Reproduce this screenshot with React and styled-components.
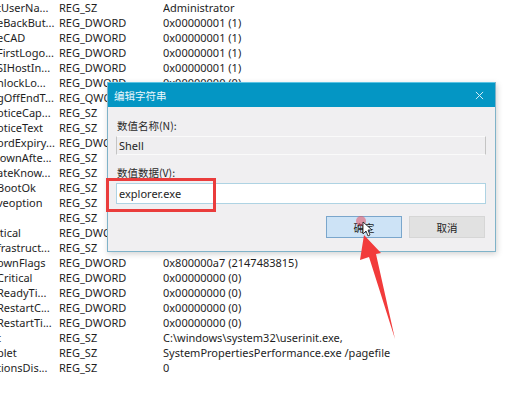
import React from "react";
import styled, { createGlobalStyle } from "styled-components";

const GlobalStyle = createGlobalStyle`
  html, body {
    margin: 0;
    padding: 0;
    background: #fff;
  }
  body {
    font-family: "Noto Sans", "Liberation Sans", sans-serif;
  }
`;

const cjk = `"Noto Sans CJK SC", "Noto Sans", sans-serif`;

//styles
const Page = styled.div`
  position: relative;
  width: 510px;
  height: 397px;
  overflow: hidden;
  background: #fff;
`;
const List = styled.div`
  display: flex;
  flex-direction: column;
  margin-left: -3px;
`;
const Row = styled.div`
  display: grid;
  grid-template-columns: 62px 104px 1fr;
  height: 15px;
  line-height: 15px;
  font-size: 11px;
  color: #1e1e1e;
  white-space: nowrap;
`;
const Cell = styled.span`
  overflow: hidden;
`;
const Dialog = styled.div`
  position: absolute;
  left: 107px;
  top: 82px;
  width: 389px;
  height: 170px;
  box-sizing: border-box;
  display: flex;
  flex-direction: column;
  background: #f0eff1;
  border: 1px solid #7fb3c9;
  border-top: none;
  box-shadow: 1px 2px 6px rgba(0, 0, 0, 0.18);
`;
const TitleBar = styled.div`
  height: 25px;
  box-sizing: border-box;
  display: flex;
  align-items: center;
  justify-content: space-between;
  padding: 0 11px 0 6px;
  background: #0496c4;
  border-top: 1px solid #5cc4e4;
  color: #eaf6fb;
  font-family: ${cjk};
  font-size: 10.5px;
`;
const Close = styled.svg`
  width: 9px;
  height: 9px;
`;
const Body = styled.div`
  flex: 1;
  display: flex;
  flex-direction: column;
  padding: 12px 9px 0 8px;
`;
const Label = styled.div`
  font-family: ${cjk};
  font-size: 10.5px;
  line-height: 14px;
  padding-left: 1px;
  margin-top: ${(p) => p.$top || 0}px;
  color: #2a2a2a;
`;
const Field = styled.div`
  margin-top: 3px;
  height: ${(p) => (p.$disabled ? 19 : 21)}px;
  box-sizing: border-box;
  display: flex;
  align-items: center;
  padding-left: 2px;
  font-size: 11px;
  color: #1e1e1e;
  background: ${(p) => (p.$disabled ? "#efeef0" : "#fff")};
  border: 1px solid ${(p) => (p.$disabled ? "#c4c4c4" : "#aed3e3")};
  border-top-color: ${(p) => (p.$disabled ? "#fafafa" : "#aed3e3")};
  border-bottom-color: ${(p) => (p.$disabled ? "#fafafa" : "#aed3e3")};
`;
const Buttons = styled.div`
  display: flex;
  justify-content: flex-end;
  gap: 7px;
  margin-top: 12px;
  margin-right: 1px;
`;
const Button = styled.div`
  width: 76px;
  height: 22px;
  box-sizing: border-box;
  display: flex;
  align-items: center;
  justify-content: center;
  font-family: ${cjk};
  font-size: 10.5px;
  color: #222;
  background: ${(p) => (p.$primary ? "#cde3f6" : "#e1e1e1")};
  border: 1px solid ${(p) => (p.$primary ? "#7aa6cc" : "#d6d6d6")};
`;
const Mark = styled.div`
  position: absolute;
  left: 106px;
  top: 178px;
  width: 110px;
  height: 34px;
  box-sizing: border-box;
  border: 3px solid #ea3c3c;
`;
const Overlay = styled.svg`
  position: absolute;
  left: 0;
  top: 0;
  pointer-events: none;
`;

const rows = [
  ["tUserNa...", "REG_SZ", "Administrator"],
  ["eBackBut...", "REG_DWORD", "0x00000001 (1)"],
  ["eCAD", "REG_DWORD", "0x00000001 (1)"],
  ["FirstLogo...", "REG_DWORD", "0x00000001 (1)"],
  ["SIHostIn...", "REG_DWORD", "0x00000001 (1)"],
  ["nlockLo...", "REG_DWORD", "0x00000000 (0)"],
  ["gOffEndT...", "REG_QWORD", "0x00000000 (0)"],
  ["oticeCap...", "REG_SZ", ""],
  ["oticeText", "REG_SZ", ""],
  ["ordExpiry...", "REG_DWORD", "0x00000005 (5)"],
  ["lownAfte...", "REG_SZ", "0"],
  ["ateKnow...", "REG_SZ", "{A520A1A4-1780}"],
  ["BootOk", "REG_SZ", "1"],
  ["veoption", "REG_SZ", "0"],
  ["", "REG_SZ", "explorer.exe"],
  ["itical", "REG_DWORD", "0x00000000 (0)"],
  ["frastruct...", "REG_SZ", "sihost.exe"],
  ["ownFlags", "REG_DWORD", "0x800000a7 (2147483815)"],
  ["Critical", "REG_DWORD", "0x00000000 (0)"],
  ["ReadyTi...", "REG_DWORD", "0x00000000 (0)"],
  ["RestartC...", "REG_DWORD", "0x00000000 (0)"],
  ["RestartTi...", "REG_DWORD", "0x00000000 (0)"],
  ["t", "REG_SZ", "C:\\windows\\system32\\userinit.exe,"],
  ["plet", "REG_SZ", "SystemPropertiesPerformance.exe /pagefile"],
  ["tionsDis...", "REG_SZ", "0"],
];

export default function App() {
  return (
    <>
      <GlobalStyle />
      <Page>
        <List>
          {rows.map((r, i) => (
            <Row key={i}>
              <Cell>{r[0]}</Cell>
              <Cell>{r[1]}</Cell>
              <Cell>{r[2]}</Cell>
            </Row>
          ))}
        </List>

        <Dialog>
          <TitleBar>
            <span>编辑字符串</span>
            <Close viewBox="0 0 10 10">
              <path d="M1 1 L9 9 M9 1 L1 9" stroke="#d6eef6" strokeWidth="1.1" />
            </Close>
          </TitleBar>
          <Body>
            <Label>数值名称(N):</Label>
            <Field $disabled>Shell</Field>
            <Label $top={11}>数值数据(V):</Label>
            <Field>explorer.exe</Field>
            <Buttons>
              <Button $primary>确定</Button>
              <Button>取消</Button>
            </Buttons>
          </Body>
        </Dialog>

        <Mark />

        <Overlay width="510" height="397" viewBox="0 0 510 397">
          <circle cx="361" cy="221" r="5" fill="rgba(232, 80, 95, 0.55)" />
          <path
            d="M363 222 L363 234 L366 231 L368 236 L370 235 L368 230 L372 230 Z"
            fill="#fff"
            stroke="#111"
            strokeWidth="0.8"
          />
          <polygon
            points="364,235 381,253 376,254 395,339 369,257 360,260"
            fill="#f23b3b"
          />
        </Overlay>
      </Page>
    </>
  );
}
